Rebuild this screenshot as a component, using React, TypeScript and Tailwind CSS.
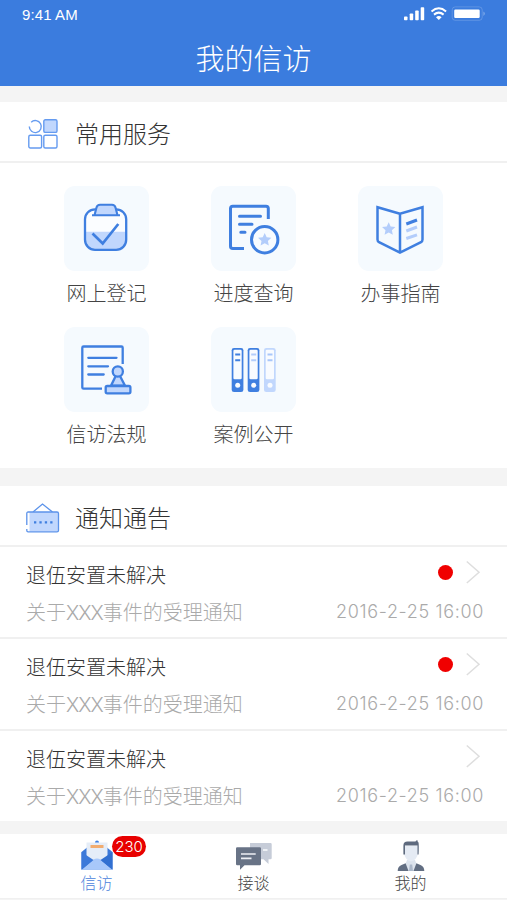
import type { ReactNode } from "react";

const BLUE = "#3f7fe0";
const PALE = "#c1d7fd";

function Star({ x, y, r }: { x: number; y: number; r: number }) {
  const points = Array.from({ length: 10 }, (_, i) => {
    const radius = i % 2 === 0 ? r : r * 0.48;
    const angle = (Math.PI / 5) * i - Math.PI / 2;
    return `${x + radius * Math.cos(angle)},${y + radius * Math.sin(angle)}`;
  }).join(" ");
  return <polygon points={points} fill="#b3cdfb" stroke="none" />;
}

function ClipboardIcon() {
  return (
    <>
      <rect x="21" y="23.3" width="41" height="40.5" rx="10" fill="#fbfdff" />
      <path d="M21 45.7H62V54a10 10 0 0 1-10 10H31a10 10 0 0 1-10-10Z" fill={PALE} />
      <rect x="21" y="23.3" width="41.2" height="40.5" rx="10" fill="none" stroke={BLUE} strokeWidth="2.3" />
      <path d="M28 29.3H56M30.5 29.3L32.5 21.5Q33.2 18.7 36 18.7H48Q50.8 18.7 51.5 21.5L53.5 29.3" fill={PALE} stroke={BLUE} strokeWidth="2.1" />
      <path d="M28.5 47.5L38.7 57.5L54.3 38" fill="none" stroke={BLUE} strokeWidth="2.7" />
    </>
  );
}

function ProgressIcon() {
  return (
    <g fill="none" stroke={BLUE} strokeWidth="3" strokeLinecap="round">
      <path d="M57.3 33V22.5Q57.3 20.2 55 20.2H21.8Q19.5 20.2 19.5 22.5V60.2Q19.5 62.5 21.8 62.5H33" strokeLinecap="butt" />
      <path d="M28.5 30.3H49.5M28.5 38.3H41M29.8 46.2H34" />
      <circle cx="53.7" cy="53.7" r="13.2" fill="#f7fbff" />
      <Star x={53.7} y={53.9} r={7} />
    </g>
  );
}

function GuideIcon() {
  return (
    <g fill="none" strokeWidth="2.5">
      <path d="M42 27.7L19.5 21.2V53.5Q19.5 55.3 21 56.2L42 66.5L63 56.2Q64.5 55.3 64.5 53.5V21.2ZV66.5" stroke={BLUE} />
      <Star x={30.7} y={43.2} r={7} />
      <path d="M48.3 38L59 34" stroke={BLUE} strokeWidth="3" />
      <path d="M48.3 45L59 41M48.3 52.5L59 48.8" stroke="#b3cdfb" strokeWidth="3" />
    </g>
  );
}

function RegulationIcon() {
  return (
    <g fill="none" stroke={BLUE} strokeWidth="2.3">
      <path d="M58.7 37V20.8Q58.7 19.5 57.4 19.5H19.6Q18.3 19.5 18.3 20.8V60.4Q18.3 61.7 19.6 61.7H38" />
      <path d="M24.3 30.8H52.5M24.3 39.3H44M24.3 47.5H39.7" strokeLinecap="round" />
      <path d="M51.7 49L47 58.7H61L56 49" fill={PALE} />
      <circle cx="53.8" cy="44.5" r="5.1" fill={PALE} />
      <rect x="41.7" y="59" width="24.7" height="7.3" rx="1.5" fill={PALE} />
    </g>
  );
}

function Binder({ x, color, tick }: { x: number; color: string; tick: string }) {
  return (
    <>
      <rect x={x} y="21" width="11.7" height="44" rx="2.3" fill={color} />
      <rect x={x + 1.7} y="22.8" width="8.3" height="29.5" rx="1.3" fill="#f8fbff" />
      <circle cx={x + 6} cy="58.2" r="2.5" fill="#f8fbff" />
      <path d={`M${x + 3.5} 27.5h5M${x + 3.5} 33.2h5`} stroke={tick} strokeWidth="2" />
    </>
  );
}

function CasesIcon() {
  return (
    <>
      <Binder x={20.7} color={BLUE} tick={BLUE} />
      <Binder x={36.7} color={BLUE} tick="#b3cdfb" />
      <Binder x={53} color={PALE} tick="#a9c7fa" />
    </>
  );
}

function GridIcon() {
  return (
    <svg width="30" height="30" viewBox="0 0 30 30" fill="none" stroke="#659bf0" strokeWidth="1.4">
      <path d="M3.2 3.2A6 6 0 1 1 1.3 7.5" />
      <rect x="15.8" y=".8" width="13.2" height="12.6" rx="1.5" fill={PALE} />
      <rect x=".8" y="16.2" width="12.8" height="12.8" rx="1.5" />
      <rect x="15.8" y="16.2" width="13.2" height="12.8" rx="1.5" />
    </svg>
  );
}

function SignIcon() {
  return (
    <svg width="34" height="30" viewBox="0 0 34 30" fill="none" stroke="#5c93ea" strokeWidth="1.3">
      <path d="M7 9L16.5 1L26.5 9" />
      <path d="M3.5 9H32V28.5H3.5Z" fill={PALE} stroke="none" />
      <path d="M.8 26V27.5Q.8 28.8 2.1 28.8H31Q32.5 28.8 32.5 27.5V10.5Q32.5 9 31 9H2.2Q.8 9 .8 10.5V22" />
      <path d="M8 19.3H26.5" stroke={BLUE} strokeWidth="2.3" strokeDasharray="2.3 3.1" />
    </svg>
  );
}

function MailIcon() {
  return (
    <svg width="32" height="31" viewBox="0 0 32 31">
      <path d="M.5 12L6 7.5H26L31.5 12V29.5H.5Z" fill="#3c79d9" />
      <circle cx="16" cy="2.5" r="2" fill={BLUE} />
      <path d="M5.5 2.5H26.5V17L16 23L5.5 17Z" fill="#e5edf8" />
      <rect x="9.5" y="5" width="13" height="3" fill="#f1ac70" />
      <path d="M.5 29.7L12.5 19.5Q16 17.5 19.5 19.5L31.5 29.7Z" fill="#a8c8fa" />
      <path d="M.5 12L12.5 20L.5 29.7Z" fill="#3c79d9" />
      <path d="M31.5 12L19.5 20L31.5 29.7Z" fill="#3270d1" />
    </svg>
  );
}

function ChatIcon() {
  return (
    <svg width="36" height="31" viewBox="0 0 36 31">
      <path d="M14 3H34.5Q35.7 3 35.7 4.2V18Q35.7 19.2 34.5 19.2H32.5V24L27.5 19.2H14Z" fill="#c6ccd8" />
      <path d="M27 10H31.5" stroke="#f2f4f8" strokeWidth="1.8" />
      <path d="M1.2 7.3H23.8Q25 7.3 25 8.5V24Q25 25.2 23.8 25.2H8.5L4 29.7V25.2H1.2Q0 25.2 0 24V8.5Q0 7.3 1.2 7.3Z" fill="#687386" />
      <path d="M5 14H19.7M5 18.3H15.5" stroke="#edf0f5" strokeWidth="1.7" />
    </svg>
  );
}

function PersonIcon() {
  return (
    <svg width="28" height="31" viewBox="0 0 28 31">
      <path d="M.7 31Q.7 26.5 4.5 25L10.5 22.5H17.5L23.5 25Q27.3 26.5 27.3 31Z" fill="#626e82" />
      <path d="M10 20H18L19.3 23.5L16.5 31H11.5L8.7 23.5Z" fill="#dce3ed" />
      <path d="M12.8 24.5H15.2L16 31H12Z" fill="#abb7c9" />
      <path d="M6.7 12V6H21.3V12Q21 15.5 18.5 19Q14 23.5 9.5 19Q7 15.5 6.7 12Z" fill="#e5ebf4" />
      <path d="M6.4 14.5V5.5Q6.4 1.5 10.5 1.5H18.5Q19 .3 20.5 .3Q20.3 1.5 21.5 2.5Q22 4 21.6 14.5H20.5V5.5H8V14.5Z" fill="#5e6a7e" />
    </svg>
  );
}

const services: { label: string; icon: ReactNode }[] = [
  { label: "网上登记", icon: <ClipboardIcon /> },
  { label: "进度查询", icon: <ProgressIcon /> },
  { label: "办事指南", icon: <GuideIcon /> },
  { label: "信访法规", icon: <RegulationIcon /> },
  { label: "案例公开", icon: <CasesIcon /> },
];

const notices = [
  { id: 1, unread: true },
  { id: 2, unread: true },
  { id: 3, unread: false },
];

function StatusBar() {
  return (
    <div className="flex h-7 items-center justify-between pl-[22px] pr-[21px] font-['Liberation_Sans',sans-serif] text-[15px] text-white">
      <span className="leading-none tracking-[0.1px]">9:41 AM</span>
      <svg width="82" height="16" viewBox="0 0 82 16" fill="#fff">
        <rect x="0" y="10.5" width="3.5" height="3.8" rx=".8" />
        <rect x="5.7" y="7.5" width="3.5" height="6.8" rx=".8" />
        <rect x="11.2" y="4.5" width="3.5" height="9.8" rx=".8" />
        <rect x="16.7" y="1.2" width="3.5" height="13.1" rx=".8" />
        <g fill="none" stroke="#fff" strokeWidth="2">
          <path d="M27.5 5.4Q34.8-.8 42.1 5.4" />
          <path d="M30 8.6Q34.8 4.7 39.6 8.6" />
        </g>
        <path d="M32 11.2Q34.8 8.8 37.6 11.2L34.8 14Z" />
        <rect x="48.2" y=".9" width="30" height="13.4" rx="3" fill="none" stroke="#fff" strokeOpacity=".18" />
        <rect x="50.2" y="3.5" width="25.5" height="8.5" rx="1.2" />
        <path d="M79.5 5.5Q82 7.7 79.5 10Z" fillOpacity=".4" />
      </svg>
    </div>
  );
}

function SectionHeader({ icon, title }: { icon: ReactNode; title: string }) {
  return (
    <div className="flex h-[61px] items-center border-b-2 border-[#f0f0f0] pt-1 pl-[26px]">
      <span className="flex w-[49px]">{icon}</span>
      <h2 className="pb-0.5 text-2xl leading-8 font-light text-[#333]">{title}</h2>
    </div>
  );
}

export default function App() {
  return (
    <div className="flex h-[900px] w-[507px] flex-col overflow-hidden bg-[#f4f4f4] font-['Noto_Sans_CJK_SC',sans-serif] font-light">
      <header className="h-[86px] shrink-0 bg-[#3b7cde]">
        <StatusBar />
        <h1 className="text-center text-[29px] leading-[58px] font-light text-white">我的信访</h1>
      </header>

      <section className="mt-4 h-[366px] shrink-0 bg-white">
        <SectionHeader icon={<span className="pl-0.5"><GridIcon /></span>} title="常用服务" />
        <div className="grid grid-cols-[repeat(3,147px)] gap-y-[18px] pt-[23px] pl-[33px]">
          {services.map((item) => (
            <div key={item.label} className="flex h-[123px] flex-col items-center">
              <div className="size-[85px] rounded-[11px] bg-[#f5fafe]">
                <svg width="85" height="85" viewBox="0 0 85 85">{item.icon}</svg>
              </div>
              <span className="mt-2 text-xl leading-7 text-[#444]">{item.label}</span>
            </div>
          ))}
        </div>
      </section>

      <section className="mt-[18px] shrink-0 bg-white">
        <SectionHeader icon={<SignIcon />} title="通知通告" />
        {notices.map((notice) => (
          <div key={notice.id} className="h-[92px] border-b-2 border-[#f0f0f0] pt-3 pr-[24px] pl-[26px] last:h-[90px] last:border-0">
            <div className="flex h-[30px] items-center justify-between">
              <h3 className="pt-0.5 text-xl font-light text-[#333]">退伍安置未解决</h3>
              <div className="flex items-center gap-[13px] pb-1">
                {notice.unread && <span className="size-[15px] rounded-full bg-[#f00000]" />}
                <svg width="17" height="24" viewBox="0 0 17 24" fill="none" stroke="#dedede" strokeWidth="1.5">
                  <path d="M.8 1.5L13 12.3L.8 23" />
                </svg>
              </div>
            </div>
            <div className="mt-2 flex h-[30px] items-center justify-between text-xl text-[#aaa]">
              <p>
                关于<span className="font-['Inter',sans-serif] tracking-[-1px]">XXX</span>事件的受理通知
              </p>
              <time className="-mr-px font-['Inter',sans-serif] text-lg tracking-[0.65px]">2016-2-25 16:00</time>
            </div>
          </div>
        ))}
      </section>

      <nav className="mt-[13px] grid h-[65px] shrink-0 grid-cols-3 border-b border-[#f0f0f0] bg-white px-[18px] pt-1.5 text-base leading-[22px] text-[#444]">
        <a className="relative flex flex-col items-center text-[#4b83dc]">
          <MailIcon />
          信访
          <span className="absolute -top-1 left-[94px] flex h-[21px] w-[34px] items-center justify-center rounded-full bg-[#e80000] font-['Inter',sans-serif] text-[15px] text-white">
            230
          </span>
        </a>
        <a className="flex flex-col items-center">
          <ChatIcon />
          接谈
        </a>
        <a className="flex flex-col items-center">
          <PersonIcon />
          我的
        </a>
      </nav>
    </div>
  );
}
